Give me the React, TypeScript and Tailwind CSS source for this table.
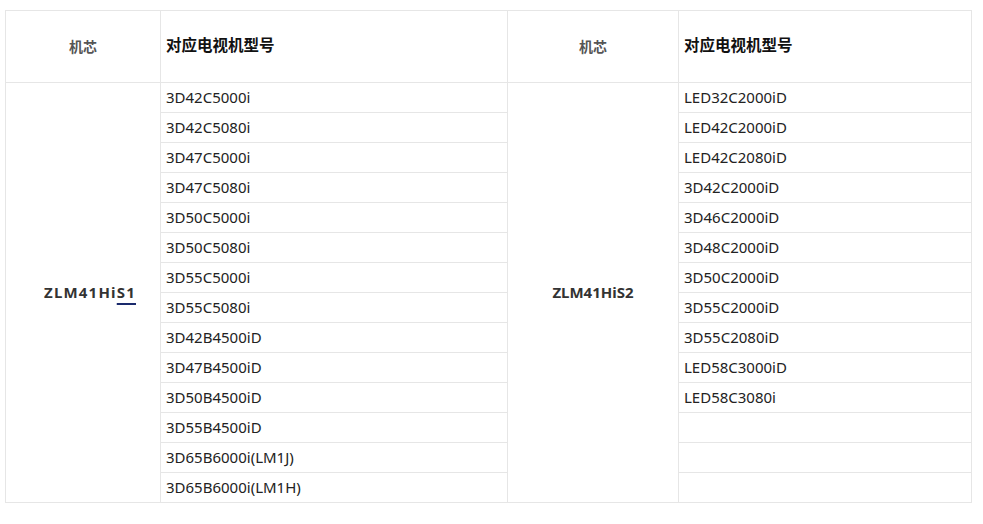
import React from "react";

const left = [
  "3D42C5000i",
  "3D42C5080i",
  "3D47C5000i",
  "3D47C5080i",
  "3D50C5000i",
  "3D50C5080i",
  "3D55C5000i",
  "3D55C5080i",
  "3D42B4500iD",
  "3D47B4500iD",
  "3D50B4500iD",
  "3D55B4500iD",
  "3D65B6000i(LM1J)",
  "3D65B6000i(LM1H)",
];
const right = [
  "LED32C2000iD",
  "LED42C2000iD",
  "LED42C2080iD",
  "3D42C2000iD",
  "3D46C2000iD",
  "3D48C2000iD",
  "3D50C2000iD",
  "3D55C2000iD",
  "3D55C2080iD",
  "LED58C3000iD",
  "LED58C3080i",
  "",
  "",
  "",
];

export default function App() {
  return (
    <div
      className="w-[983px] h-[524px] bg-white pt-[10px] pl-[5px]"
      style={{ fontFamily: '"Noto Sans", "Noto Sans CJK SC", sans-serif' }}
    >
      <table className="border-collapse table-fixed w-[966px]">
        <colgroup>
          <col className="w-[155px]" />
          <col className="w-[347px]" />
          <col className="w-[171px]" />
          <col className="w-[293px]" />
        </colgroup>
        <tbody>
          <tr className="h-[72px]">
            <td className="border border-[#e6e6e6] text-center text-[14px] font-bold text-[#555] p-0">
              机芯
            </td>
            <td className="border border-[#e6e6e6] text-left text-[15.5px] font-bold text-[#111] pl-[5px] pb-[1px]">
              对应电视机型号
            </td>
            <td className="border border-[#e6e6e6] text-center text-[14px] font-bold text-[#555] p-0">
              机芯
            </td>
            <td className="border border-[#e6e6e6] text-left text-[15.5px] font-bold text-[#111] pl-[5px] pb-[1px]">
              对应电视机型号
            </td>
          </tr>
          {left.map((l, i) => (
            <tr key={i} className="h-[30px]">
              {i === 0 && (
                <td
                  rowSpan={14}
                  className="border border-[#e6e6e6] text-center text-[15px] font-bold text-[#333] p-0 pl-[14px] tracking-[1.2px]"
                >
                  ZLM41Hi
                  <span className="underline decoration-[#1a2a6c] decoration-[1.5px] underline-offset-[5px]">
                    S1
                  </span>
                </td>
              )}
              <td className="border border-[#e6e6e6] text-[15px] text-[#222] pl-[5px] p-0 leading-[29px]">
                {l}
              </td>
              {i === 0 && (
                <td
                  rowSpan={14}
                  className="border border-[#e6e6e6] text-center text-[15px] font-bold text-[#333] p-0"
                >
                  ZLM41HiS2
                </td>
              )}
              <td className="border border-[#e6e6e6] text-[15px] text-[#222] pl-[5px] p-0 leading-[29px]">
                {right[i]}
              </td>
            </tr>
          ))}
        </tbody>
      </table>
    </div>
  );
}
